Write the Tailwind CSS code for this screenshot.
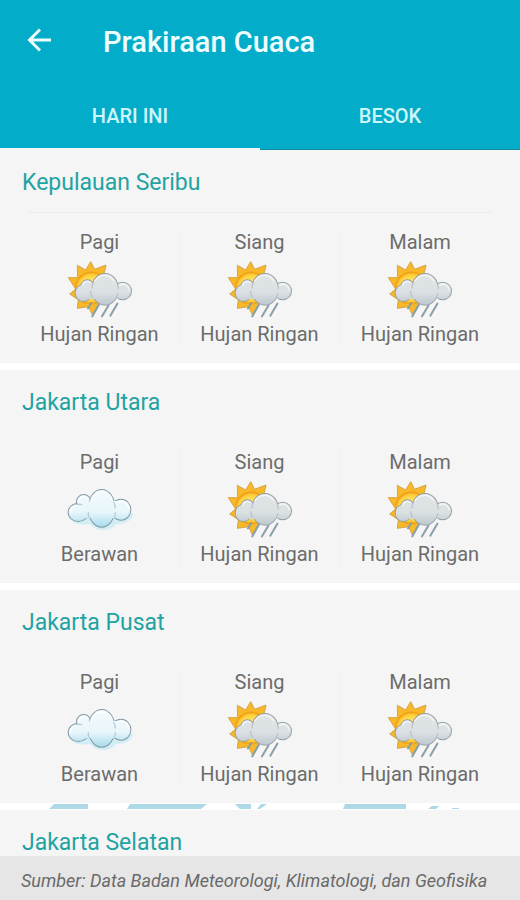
<!DOCTYPE html>
<html lang="id">
<head>
<meta charset="utf-8">
<meta name="viewport" content="width=device-width, initial-scale=1">
<title>Prakiraan Cuaca</title>
<script src="https://cdn.jsdelivr.net/npm/@tailwindcss/browser@4"></script>
</head>
<body class="flex h-screen flex-col overflow-hidden bg-white font-[Roboto,sans-serif] text-[#6c6c6c]">
<svg class="absolute size-0" aria-hidden="true">
  <defs>
    <linearGradient id="grey" gradientUnits="userSpaceOnUse" x1="0" y1="55" x2="0" y2="150"><stop offset="0" stop-color="#e0e4e7"/><stop offset=".6" stop-color="#dbe0e3"/><stop offset="1" stop-color="#bcc8ce"/></linearGradient>
    <linearGradient id="pale" gradientUnits="userSpaceOnUse" x1="0" y1="45" x2="0" y2="155"><stop offset="0" stop-color="#f4fafd"/><stop offset=".6" stop-color="#e8f6fb"/><stop offset="1" stop-color="#a9dbec"/></linearGradient>
    <radialGradient id="sun"><stop offset="0" stop-color="#ffe98a"/><stop offset=".75" stop-color="#ffd647"/><stop offset="1" stop-color="#fbb81f"/></radialGradient>
    <g id="rain-lobes"><ellipse cx="70" cy="114" rx="23" ry="24"/><circle cx="82" cy="94" r="18"/><ellipse cx="135" cy="103" rx="39" ry="46"/><circle cx="188" cy="108" r="25"/><path d="M75 90H180V125L160 132H68Z" stroke="none"/></g>
    <g id="cloud-lobes"><ellipse cx="55" cy="112" rx="29" ry="26"/><circle cx="71" cy="80" r="20"/><ellipse cx="125" cy="100" rx="39" ry="55"/><ellipse cx="183" cy="104" rx="28" ry="30"/><path d="M62 78H180V125L160 130H60Z" stroke="none"/></g>
    <symbol id="rain" viewBox="0 15 240 186">
      <path fill="#f8b828" stroke="#d3a548" stroke-width="3" stroke-linejoin="round" d="M92 20 104 43 138 30 132 57 150 80 146 130 120 145 96 178 86 155 52 160 55 134 29 117 47 102 25 68 53 68 52 31 77 45Z"/>
      <circle cx="94" cy="99" r="47" fill="url(#sun)" stroke="#f2a21a" stroke-width="5"/>
      <g stroke="#86a0aa" stroke-width="6" stroke-linecap="round"><path d="M116 150 97 184M145 152 126 184M172 146 151 182M94 144 84 160"/></g>
      <use href="#rain-lobes" fill="#979fa4" stroke="#979fa4" stroke-width="6"/>
      <use href="#rain-lobes" fill="url(#grey)"/>
      <path fill="none" stroke="#afb9bf" stroke-width="3" stroke-linecap="round" d="M96 99C96 91 98 85 101 79M97 126C94 120 92 115 92 109M172 88C174 92 175 97 174 102M169 128C171 124 173 120 174 116"/>
      <path fill="none" stroke="#f5f7f8" stroke-width="4" stroke-linecap="round" d="M105 77C118 56 148 55 162 78M68 91C69 81 81 76 90 82M180 89C192 83 206 92 208 105"/>
    </symbol>
    <symbol id="cloud" viewBox="0 15 240 186">
      <path fill="#d3edf7" d="M36 138C50 152 82 148 92 148C106 172 156 170 168 146C190 150 214 140 220 116L150 110Z"/>
      <use href="#cloud-lobes" fill="#829ba5" stroke="#829ba5" stroke-width="6"/>
      <use href="#cloud-lobes" fill="url(#pale)"/>
      <path fill="none" stroke="#9dbfcc" stroke-width="3" stroke-linecap="round" d="M49 89C54 87 60 87 65 89M88 79C88 74 90 70 92 67M161 82C165 87 166 93 165 99M163 126C166 121 167 117 166 113M88 127C84 122 84 118 85 113"/>
      <path fill="none" stroke="#fff" stroke-width="4" stroke-linecap="round" d="M96 70C109 44 142 44 155 70M56 80C58 65 73 61 83 69M31 113C31 102 38 94 50 92M173 81C190 73 205 85 207 103"/>
    </symbol>
  </defs>
</svg>

<header class="shrink-0 bg-[#03adca] text-[#eefdff]">
  <div class="flex h-[84px] items-center gap-12 px-[23px]">
    <button type="button" aria-label="Kembali" class="flex size-8 items-center justify-center">
      <svg class="size-8" viewBox="0 0 32 32" fill="none" stroke="currentColor" stroke-width="3"><path d="M28 14H6M17 3.500 6.500 14 17 24.500"/></svg>
    </button>
    <h1 class="text-[29px] leading-8 font-medium">Prakiraan Cuaca</h1>
  </div>
  <nav class="grid h-[66px] grid-cols-2 text-center text-xl font-medium text-[#cdf6fb]">
    <a href="#hari-ini" aria-current="page" class="border-b-2 border-[#f5f8f8] pt-[18px]">HARI INI</a>
    <a href="#besok" class="border-b border-[#198ba0] pt-[18px]">BESOK</a>
  </nav>
</header>

<main id="hari-ini" class="min-h-0 flex-1 overflow-y-auto [scrollbar-width:none]"></main>

<footer class="h-11 shrink-0 truncate bg-[#e6e6e6] px-[21px] py-[13px] text-lg leading-6 text-[#6a6a6a] italic">Sumber: Data Badan Meteorologi, Klimatologi, dan Geofisika</footer>

<script>
const areas = [
  ['Kepulauan Seribu', ['rain', 'rain', 'rain']],
  ['Jakarta Utara', ['cloud', 'rain', 'rain']],
  ['Jakarta Pusat', ['cloud', 'rain', 'rain']],
  ['Jakarta Selatan', []]
];
const times = ['Pagi', 'Siang', 'Malam'];
const names = { rain: 'Hujan Ringan', cloud: 'Berawan' };
const plainGap = '<div class="h-[7px] bg-white"></div>';
const patternGap = `<svg class="block h-[7px] w-full bg-white" viewBox="0 0 520 7" preserveAspectRatio="none" aria-hidden="true"><path fill="#add9e6" d="M54 1H88V6H49ZM130 1H207L201 6H127ZM235 1H251V6H240ZM261 1H267L260 6H257ZM345 1H406V6H343ZM432 3H439L436 6H428ZM452 5H459V6H452Z"/></svg>`;
document.querySelector('main').innerHTML = areas.map(([area, kinds], i) => `
  <section class="bg-[#f5f5f5] pt-[17px]">
    <h2 class="px-[22px] text-[23px] leading-8 text-[#1fa3a3]">${area}</h2>
    ${kinds.length ? `
    <div class="mx-7 mt-[13px] border-t ${i ? 'border-transparent' : 'border-[#ececec]'}"></div>
    <div class="mx-5 mt-[17px] grid grid-cols-3 pb-[17px] text-center text-xl leading-6">
      ${kinds.map((k, j) => `
      <div class="flex flex-col items-center ${j < 2 ? 'border-r border-[#efefef]' : ''}">
        <h3>${times[j]}</h3>
        <svg class="mt-1.5 h-[62px] w-20" aria-hidden="true"><use href="#${k}"/></svg>
        <p>${names[k]}</p>
      </div>`).join('')}
    </div>` : ''}
  </section>${i < 2 ? plainGap : i === 2 ? patternGap : ''}`).join('');
</script>
</body>
</html>
